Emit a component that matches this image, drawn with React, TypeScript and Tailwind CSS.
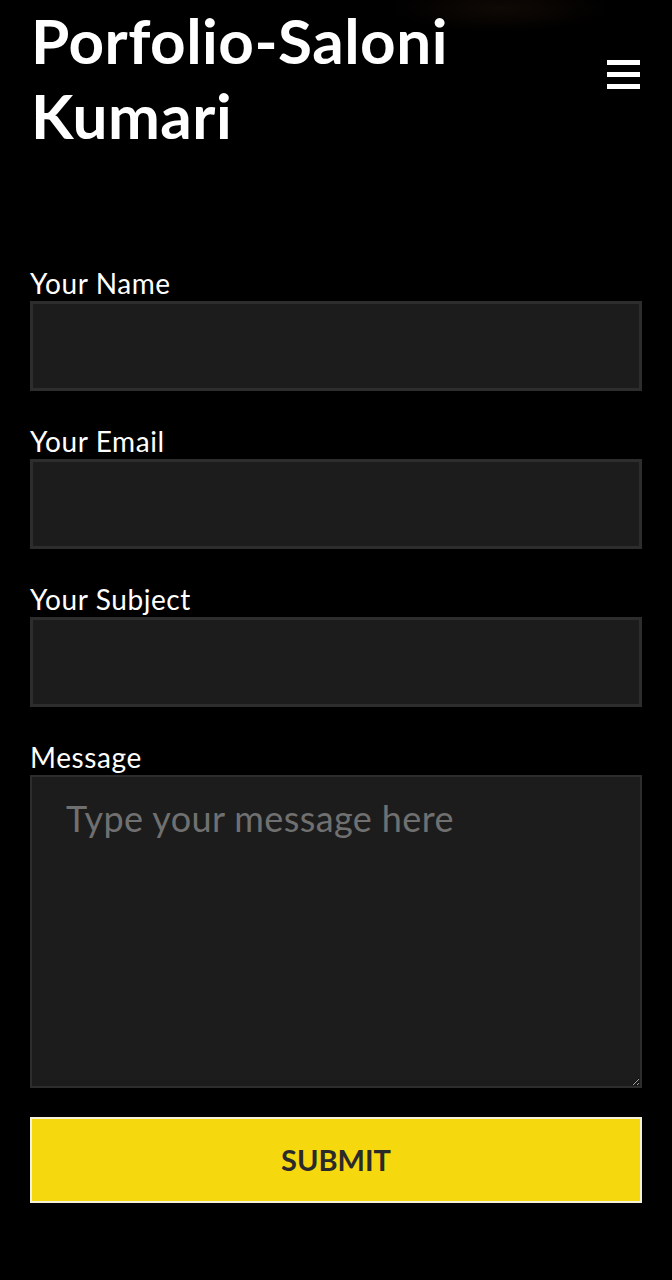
const FIELDS = ['Your Name', 'Your Email', 'Your Subject'];

function Field({ label }: { label: string }) {
  return (
    <div className="mb-[34px] flex flex-col">
      <label className="text-[28px] leading-[32px] tracking-[0.6px] text-white">{label}</label>
      <input
        type="text"
        className="mt-[2px] h-[90px] w-full border-[3px] border-[#2d2d2d] bg-[#1c1c1c] px-4 text-[27px] text-white outline-none"
      />
    </div>
  );
}

export default function App() {
  return (
    <div className="min-h-[1280px] bg-[radial-gradient(ellipse_110px_24px_at_500px_8px,#100905,transparent)] bg-black font-['Lato',sans-serif] text-white">
      <header className="flex items-start justify-between pl-[31px] pr-[32px] pt-[3px]">
        <h1 className="text-[62px] font-bold leading-[75px] tracking-[0.5px]">
          Porfolio-Saloni
          <br />
          Kumari
        </h1>
        <button className="mt-[57px] flex w-[33px] flex-col gap-[7px]" aria-label="menu">
          <span className="h-[5px] w-full bg-white" />
          <span className="h-[5px] w-full bg-white" />
          <span className="h-[5px] w-full bg-white" />
        </button>
      </header>

      <form className="px-[30px] pt-[114px]">
        {FIELDS.map((f) => (
          <Field key={f} label={f} />
        ))}
        <div className="flex flex-col">
          <label className="text-[28px] leading-[32px] tracking-[0.6px] text-white">Message</label>
          <textarea
            placeholder="Type your message here"
            className="mt-[2px] h-[313px] w-full border-[2px] border-[#2d2d2d] bg-[#1c1c1c] px-[34px] pt-[20px] text-[36px] leading-[42px] tracking-[0.4px] text-white outline-none placeholder:text-[#707070]"
          />
        </div>
        <button
          type="button"
          className="mt-[29px] h-[86px] w-full border-[2px] border-[#f4f1d8] bg-[#f6d80f] text-[29px] font-bold text-[#2a2a2a]"
        >
          SUBMIT
        </button>
      </form>
    </div>
  );
}
